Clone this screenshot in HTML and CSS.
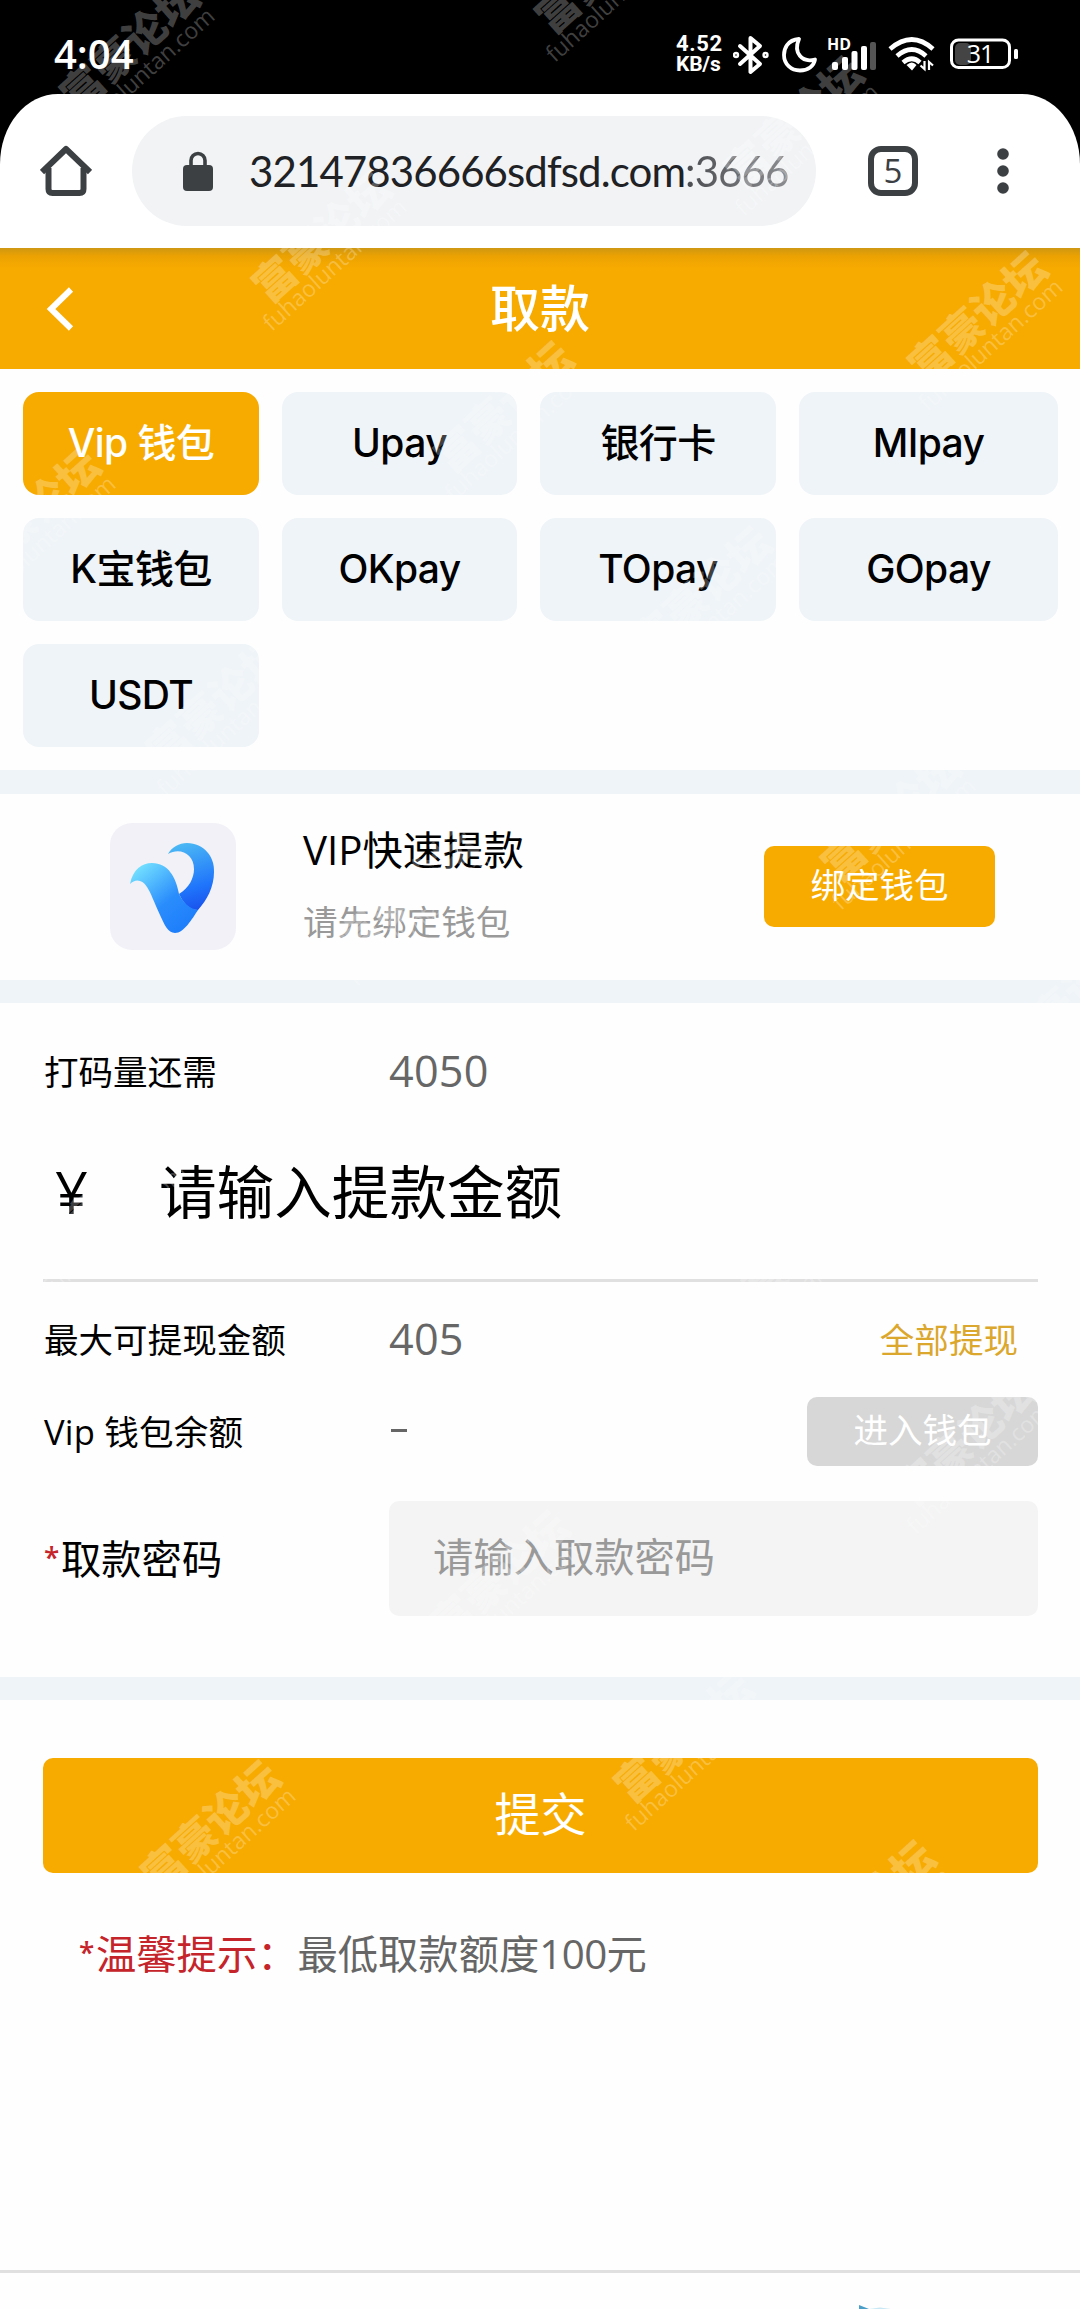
FILE: index.html
```html
<!DOCTYPE html>
<html lang="zh-CN">
<head>
<meta charset="utf-8">
<title>取款</title>
<link rel="stylesheet" href="styles.css">
</head>
<body>
<div class="screen">
  <div class="status">
    <span class="clock">4:04</span>
    <div class="status-icons">
      <div class="speed"><span>4.52</span><span>KB/s</span></div>
      <svg class="bt" width="36" height="40" viewBox="0 0 36 40" fill="none" stroke="#fff" stroke-width="4" stroke-linejoin="round" stroke-linecap="round"><path d="M7 11 27 29 17.500 37V3L27 11 7 29"/><circle cx="3" cy="20" r="1.200"/><circle cx="32.500" cy="20" r="1.200"/></svg>
      <svg class="moon" width="36" height="38" viewBox="0 0 36 38" fill="none" stroke="#fff" stroke-width="3.800" stroke-linejoin="round"><path d="M17 3C5 4 2 13 2 19c0 9 7 15.500 16 15.500 8 0 14-4.500 15-11C20 27 11 17 17 3Z"/></svg>
      <svg class="signal" width="52" height="36" viewBox="0 0 52 36" fill="#fff"><text x="0" y="14" font-size="16" font-weight="700" textLength="24">HD</text><rect x="5" y="26" width="6" height="8" rx="2"/><rect x="15" y="21" width="6" height="13" rx="2"/><rect x="24.500" y="15" width="6" height="19" rx="2"/><rect x="34" y="10" width="6" height="24" rx="2"/><rect x="43" y="6" width="6" height="28" rx="2" fill="#555"/></svg>
      <svg class="wifi" width="48" height="36" viewBox="0 0 48 36" fill="none" stroke="#fff" stroke-width="4.600"><path d="M2 13Q24-6 45 13M9 20Q24 7 38 20M15 26.500Q24 19 32 26.500"/><path d="M24 34.500 18.500 29Q24 24 28.500 29Z" fill="#fff" stroke="none"/><path d="M36.500 25v8l-4-3.500M41 34v-8l4 3.500" stroke-width="2.200"/></svg>
      <svg class="battery" width="70" height="34" viewBox="0 0 70 34" fill="none"><rect x="5" y="6" width="16" height="22" rx="5" fill="#444"/><rect x="1.500" y="3" width="58" height="27.500" rx="7" stroke="#fff" stroke-width="3"/><rect x="64" y="12" width="4" height="10" rx="1.500" fill="#fff"/><text x="30" y="25.500" font-size="25" font-weight="500" text-anchor="middle" fill="#fff" letter-spacing="-1">31</text></svg>
    </div>
  </div>

  <div class="toolbar">
    <svg class="home" width="52" height="52" viewBox="0 0 52 52" fill="none" stroke="#3c4043" stroke-width="6" stroke-linejoin="round"><path d="M2 27 26 4 50 27"/><path d="M8.500 23v21q0 4 4 4h27q4 0 4-4V23"/></svg>
    <div class="omnibox">
      <svg width="30" height="40" viewBox="0 0 30 40"><rect y="14" width="30" height="26" rx="4" fill="#3c4043"/><path d="M8 15V9.500a7 7 0 0 1 14 0V15" fill="none" stroke="#3c4043" stroke-width="3.600"/></svg>
      <span class="url">32147836666sdfsd.com<span class="port">:3666</span></span>
    </div>
    <div class="tabs-count">5</div>
    <svg class="dots" width="14" height="48" viewBox="0 0 14 48" fill="#3c4043"><circle cx="7" cy="7" r="5.800"/><circle cx="7" cy="24" r="5.800"/><circle cx="7" cy="41" r="5.800"/></svg>
  </div>

  <header class="header">
    <svg width="28" height="44" viewBox="0 0 28 44" fill="none" stroke="#fff" stroke-width="6"><path d="M25 2.500 5 22 25 41.500"/></svg>
    <h1>取款</h1>
  </header>

  <div class="methods">
    <div class="method active">Vip 钱包</div><div class="method">Upay</div><div class="method">银行卡</div><div class="method">MIpay</div>
    <div class="method">K宝钱包</div><div class="method">OKpay</div><div class="method">TOpay</div><div class="method">GOpay</div>
    <div class="method">USDT</div>
  </div>

  <section class="wallet">
    <svg class="logo" width="126" height="127" viewBox="0 0 126 127">
      <defs>
        <linearGradient id="wing" x1="0" y1="0" x2=".8" y2="1"><stop offset=".1" stop-color="#72dfff"/><stop offset=".6" stop-color="#2a8dfc"/><stop offset="1" stop-color="#1c7cfb"/></linearGradient>
        <linearGradient id="curl" x1=".3" y1="0" x2=".5" y2="1"><stop offset="0" stop-color="#4cb9f4"/><stop offset=".7" stop-color="#1f74fb"/><stop offset="1" stop-color="#1a55ee"/></linearGradient>
      </defs>
      <rect width="126" height="127" rx="22" fill="#f1f1f7"/>
      <path d="M58 31C62 24 69 20 77 20 94 20 105 34 104 49 104 64 97 77 88 87 78 87 73 79 69 71 79 65 84 55 84 46 84 31 70 24 58 31Z" fill="url(#curl)"/>
      <path d="M20 61C23 46 32 40 42 40 58 40 66 54 69 71 73 79 79 86 88 87 82 96 74 110 65 110 58 110 54 101 50 92 44 79 41 70 37 64 32 56 25 56 20 61Z" fill="url(#wing)"/>
    </svg>
    <div class="wallet-text"><div class="wallet-title">VIP快速提款</div><div class="wallet-sub">请先绑定钱包</div></div>
    <div class="bind">绑定钱包</div>
  </section>

  <section class="form">
    <div class="row need"><span class="label">打码量还需</span><span class="value">4050</span></div>
    <div class="amount"><span class="yen">¥</span><span>请输入提款金额</span></div>
    <div class="row max"><span class="label">最大可提现金额</span><span class="value">405</span><span class="all">全部提现</span></div>
    <div class="row balance"><span class="label vip">Vip 钱包余额</span><span class="value"><i class="dash"></i></span><span class="enter">进入钱包</span></div>
    <div class="row password"><span class="label big"><b>*</b>取款密码</span><div class="field">请输入取款密码</div></div>
  </section>

  <section class="submit-area">
    <div class="submit">提交</div>
    <p class="notice"><span class="warn"><b>*</b>温馨提示：</span>最低取款额度<span class="num">100</span>元</p>
  </section>
  <footer class="footer"><svg width="60" height="6" viewBox="0 0 60 6"><path d="M19 6V2L29 6Z" fill="#4a9fc9"/><path d="M29 6 40 4.500 51 6Z" fill="#c7e8f4"/></svg></footer>

  <div class="marks">
    <div class="mark" style="left:128px;top:44px">富豪论坛<small>fuhaoluntan.com</small></div>
    <div class="mark" style="left:603px;top:-34px">富豪论坛<small>fuhaoluntan.com</small></div>
    <div class="mark" style="left:792px;top:120px">富豪论坛<small>fuhaoluntan.com</small></div>
    <div class="mark" style="left:320px;top:235px">富豪论坛<small>fuhaoluntan.com</small></div>
    <div class="mark" style="left:976px;top:315px">富豪论坛<small>fuhaoluntan.com</small></div>
    <div class="mark" style="left:502px;top:405px">富豪论坛<small>fuhaoluntan.com</small></div>
    <div class="mark" style="left:29px;top:512px">富豪论坛<small>fuhaoluntan.com</small></div>
    <div class="mark" style="left:700px;top:590px">富豪论坛<small>fuhaoluntan.com</small></div>
    <div class="mark" style="left:214px;top:700px">富豪论坛<small>fuhaoluntan.com</small></div>
    <div class="mark" style="left:889px;top:814px">富豪论坛<small>fuhaoluntan.com</small></div>
    <div class="mark" style="left:405px;top:890px">富豪论坛<small>fuhaoluntan.com</small></div>
    <div class="mark" style="left:1068px;top:995px">富豪论坛<small>fuhaoluntan.com</small></div>
    <div class="mark" style="left:100px;top:1200px">富豪论坛<small>fuhaoluntan.com</small></div>
    <div class="mark" style="left:780px;top:1265px">富豪论坛<small>fuhaoluntan.com</small></div>
    <div class="mark" style="left:964px;top:1438px">富豪论坛<small>fuhaoluntan.com</small></div>
    <div class="mark" style="left:498px;top:1574px">富豪论坛<small>fuhaoluntan.com</small></div>
    <div class="mark" style="left:682px;top:1735px">富豪论坛<small>fuhaoluntan.com</small></div>
    <div class="mark" style="left:209px;top:1824px">富豪论坛<small>fuhaoluntan.com</small></div>
    <div class="mark" style="left:864px;top:1904px">富豪论坛<small>fuhaoluntan.com</small></div>
  </div>
</div>
</body>
</html>
```
FILE: styles.css
```css
* { box-sizing: border-box; }
body { margin: 0; background: #000; font-family: "Open Sans", "Noto Sans CJK SC", sans-serif; color: #000; }
.screen { position: relative; width: 1080px; height: 2309px; overflow: hidden; display: flex; flex-direction: column; background: #fefefe; }

.status { height: 94px; flex: none; background: #000; color: #fff; display: flex; justify-content: space-between; padding: 0 60px 0 54px; }
.clock { font-size: 40px; line-height: 107px; font-weight: 600; }
.status-icons { display: flex; align-items: flex-start; padding-top: 34px; }
.speed { display: flex; flex-direction: column; font-family: Roboto, sans-serif; font-size: 22px; font-weight: 700; line-height: 20px; width: 49px; margin-right: 6px; white-space: nowrap; letter-spacing: .6px; }
.speed span:last-child { font-size: 21px; letter-spacing: -.2px; }
.bt { margin: 1px 13px 0 2px; }
.moon { margin: 2px 9px 0 0; }
.signal { margin: 2px 9px 0 0; }
.wifi { margin: 2px 14px 0 0; }
.battery { margin-top: 3px; }

.toolbar { height: 154px; flex: none; display: flex; align-items: center; background: #000; padding: 0 70px 0 40px; position: relative; z-index: 0; }
.toolbar::before { content: ""; position: absolute; inset: 0; z-index: -1; background: #fff; border-radius: 58px 58px 0 0 / 70px 70px 0 0; }
.home { margin-right: 40px; }
.omnibox { width: 684px; height: 110px; border-radius: 55px; background: #f1f3f5; display: flex; align-items: center; padding-left: 51px; }
.omnibox svg { margin-top: -1px; }
.url { margin-left: 36px; font-family: Lato, "Open Sans", sans-serif; font-size: 42px; line-height: 60px; white-space: nowrap; color: #202124; letter-spacing: -.9px; }
.port { background: linear-gradient(90deg, #4a4c50, #8b8d91); -webkit-background-clip: text; background-clip: text; color: transparent; }
.tabs-count { width: 50px; height: 50px; margin-left: 52px; border: 6px solid #3c4043; border-radius: 13px; display: flex; align-items: center; justify-content: center; font-size: 33px; line-height: 38px; color: #3c4043; }
.dots { margin-left: 78px; }

.header { height: 121px; flex: none; display: flex; align-items: center; padding: 0 46px; background: linear-gradient(#cf9713 0, #eba202 8px, #f7aa00 20px); }
.header h1 { flex: 1; margin: -7px 28px 0 0; text-align: center; color: #fff; font-size: 50px; line-height: 60px; font-weight: 500; font-family: "Noto Sans CJK SC", sans-serif; }

.methods { flex: none; height: 401px; display: grid; grid-template-columns: 236px 235px 236px 259px; grid-auto-rows: 103px; gap: 23px; padding: 23px; }
.method { border-radius: 16px; background: #eff4f8; display: flex; align-items: center; justify-content: center; font-family: Inter, "Noto Sans CJK SC", sans-serif; font-size: 39px; font-weight: 500; letter-spacing: -.6px; line-height: 60px; white-space: nowrap; padding-bottom: 1px; }
.method.active { background: #f7aa00; color: #fff; }

.wallet { flex: none; height: 233px; border: solid #eff4f8; border-width: 24px 0 23px; display: flex; align-items: center; padding: 0 85px 2px 110px; }
.wallet-text { margin: -6px 0 0 67px; flex: 1; }
.wallet-title { font-size: 40.300px; line-height: 60px; }
.wallet-sub { font-size: 34.560px; line-height: 50px; margin-top: 17px; color: #999; }
.bind { width: 231px; height: 81px; border-radius: 10px; background: #f7aa00; color: #fff; text-align: center; font-size: 34.560px; line-height: 78px; }

.form { flex: none; height: 697px; border-bottom: 23px solid #eff4f8; padding: 34px 42px 0 43px; }
.row { display: flex; align-items: center; }
.label { width: 346px; padding-left: 1px; font-size: 34.560px; line-height: 50px; }
.vip { letter-spacing: .2px; }
.value { font-size: 43.200px; line-height: 60px; color: #666; letter-spacing: .2px; position: relative; top: -1px; }
.need { height: 69px; }
.amount { height: 176px; border-bottom: 3px solid #e0e0e0; display: flex; align-items: center; padding-bottom: 1px; font-size: 57.600px; line-height: 80px; }
.yen { width: 116px; padding-left: 12px; }
.max { height: 115px; }
.all { margin-left: auto; margin-right: 20px; margin-top: -4px; color: #dba72c; font-size: 34.560px; }
.balance { height: 69px; }
.dash { display: block; width: 16px; height: 3px; margin-left: 2px; background: #666; }
.enter { margin-left: auto; width: 231px; height: 69px; border-radius: 10px; background: #d7d7d7; color: #fff; text-align: center; font-size: 34.560px; line-height: 66px; }
.password { margin-top: 35px; }
.label.big { font-size: 40.300px; white-space: nowrap; }
.label b, .warn b { color: #c5242b; font-weight: 600; font-size: 28px; line-height: 30px; vertical-align: 6px; display: inline-block; width: 17px; }
.field { flex: 1; height: 115px; border-radius: 10px; background: #f4f4f4; color: #999; font-size: 40.300px; line-height: 112px; padding-left: 44px; }

.submit-area { flex: 1; padding: 58px 42px 0 43px; }
.submit { height: 115px; border-radius: 10px; background: #f7aa00; color: #fff; text-align: center; font-size: 46px; line-height: 111px; }
.notice { margin: 51px 0 0 36px; font-size: 40.300px; line-height: 60px; color: #666; }
.num { letter-spacing: -.6px; }
.warn { color: #c5242b; }
.footer { flex: none; height: 39px; border-top: 3px solid #e0e0e0; display: flex; align-items: flex-end; padding-left: 840px; }

.marks { position: absolute; inset: 0; overflow: hidden; pointer-events: none; }
.mark { position: absolute; width: 168px; height: 44px; margin: -22px 0 0 -84px; transform: rotate(-42deg); color: rgba(255, 255, 255, .26); font: 900 42px/44px "Noto Sans CJK SC", sans-serif; white-space: nowrap; }
.mark small { display: block; font: 500 23px/20px "Open Sans", sans-serif; margin: -1px 0 0 -17px; }
```
